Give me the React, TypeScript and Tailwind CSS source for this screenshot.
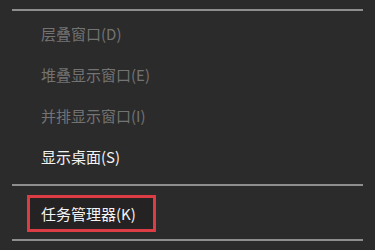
export default function App() {
  const font = { fontFamily: '"Noto Sans CJK SC", "Microsoft YaHei", sans-serif' };
  const items = [
    { label: "层叠窗口(D)", disabled: true },
    { label: "堆叠显示窗口(E)", disabled: true },
    { label: "并排显示窗口(I)", disabled: true },
    { label: "显示桌面(S)", disabled: false },
  ];
  return (
    <div className="w-[375px] h-[250px] bg-[#2b2b2b] overflow-hidden flex flex-col pt-[9px]" style={font}>
      <div className="h-[2px] mx-[12px] bg-[#8e8e8e]" />
      <div className="flex flex-col pt-[2px]">
        {items.map((it) => (
          <div key={it.label} className="h-[41px] flex items-center pl-[41px]">
            <span className={`text-[15px] leading-none ${it.disabled ? "text-[#737373]" : "text-[#f2f2f2]"}`}>
              {it.label}
            </span>
          </div>
        ))}
      </div>
      <div className="h-[2px] mx-[12px] mt-[7px] bg-[#8e8e8e]" />
      <div className="ml-[27px] mt-[9px] w-[129px] h-[37px] border-[3px] border-[#dc3c43] bg-[#252224] flex items-center pl-[11px]">
        <span className="text-[15px] leading-none text-[#f4f4f4]">任务管理器(K)</span>
      </div>
      <div className="h-[2px] mx-[12px] mt-[7px] bg-[#8e8e8e]" />
    </div>
  );
}
